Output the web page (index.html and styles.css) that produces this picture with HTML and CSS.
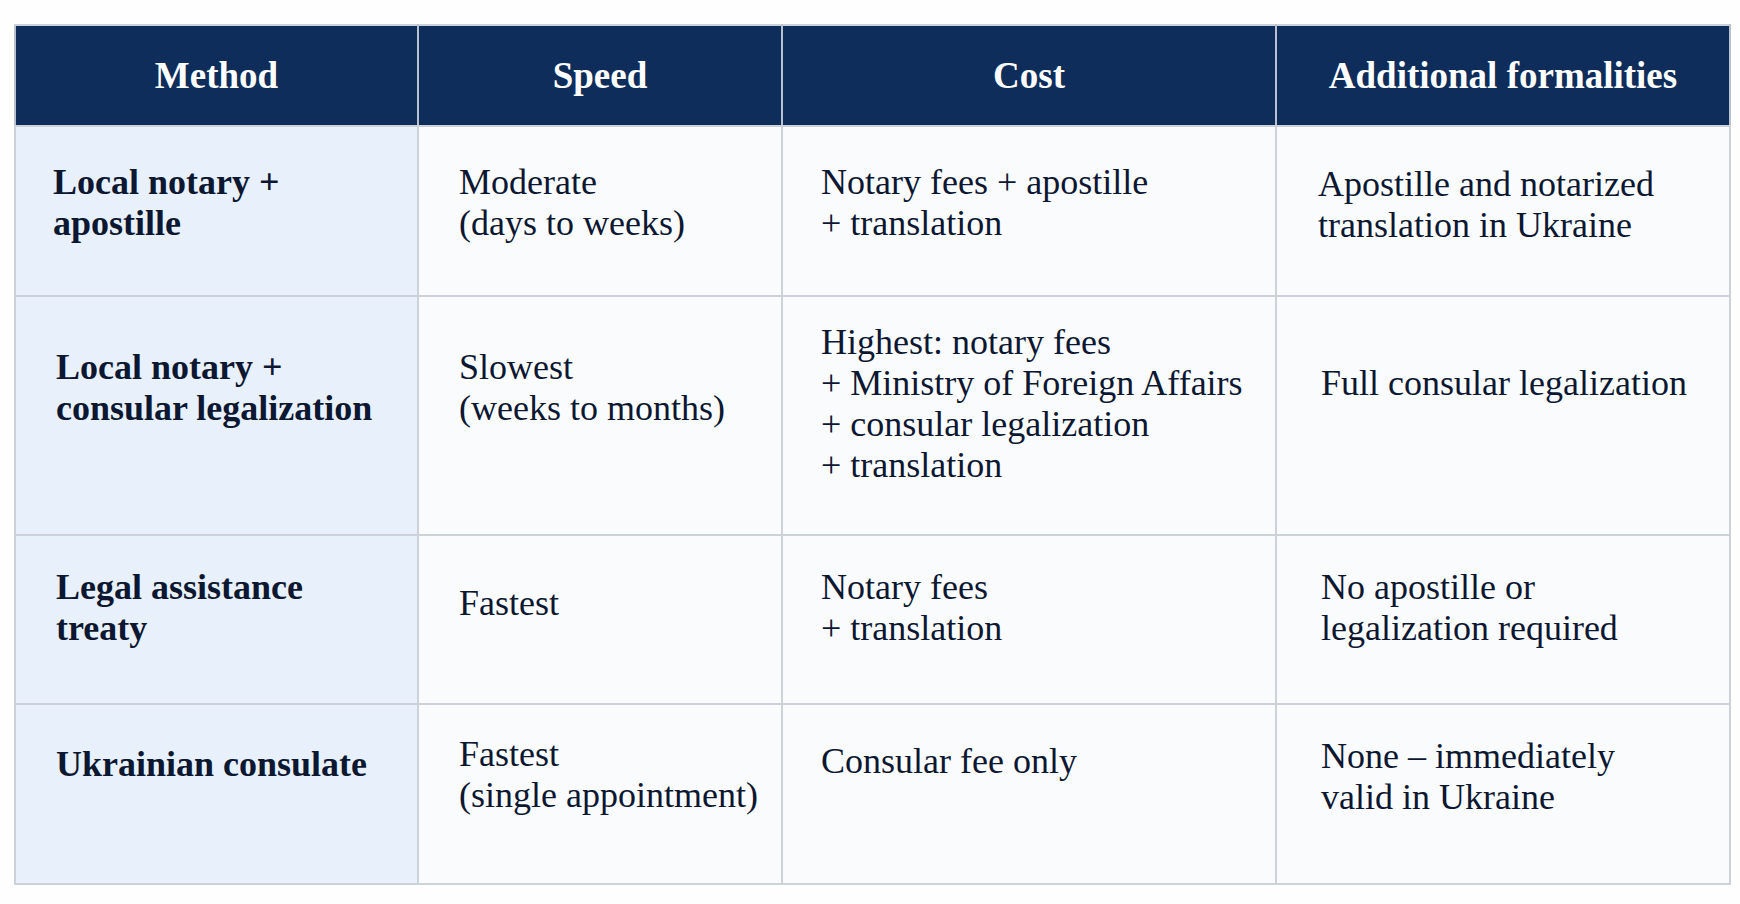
FILE: index.html
```html
<!DOCTYPE html>
<html lang="en">
<head>
<meta charset="utf-8">
<title>Methods comparison</title>
<link rel="stylesheet" href="styles.css">
</head>
<body>
<table class="compare">
  <colgroup>
    <col class="w-method">
    <col class="w-speed">
    <col class="w-cost">
    <col class="w-add">
  </colgroup>
  <thead>
    <tr class="head">
      <th>Method</th>
      <th>Speed</th>
      <th>Cost</th>
      <th>Additional formalities</th>
    </tr>
  </thead>
  <tbody>
    <tr class="r1">
      <td class="method first">Local notary +<br>apostille</td>
      <td class="speed">Moderate<br>(days to weeks)</td>
      <td class="cost">Notary fees + apostille<br>+ translation</td>
      <td class="add first pt-37">Apostille and notarized<br>translation in Ukraine</td>
    </tr>
    <tr class="r2">
      <td class="method">Local notary +<br>consular legalization</td>
      <td class="speed">Slowest<br>(weeks to months)</td>
      <td class="cost pt-25">Highest: notary fees<br>+ Ministry of Foreign Affairs<br>+ consular legalization<br>+ translation</td>
      <td class="add pt-66">Full consular legalization</td>
    </tr>
    <tr class="r3">
      <td class="method">Legal assistance<br>treaty</td>
      <td class="speed pt-47">Fastest</td>
      <td class="cost">Notary fees<br>+ translation</td>
      <td class="add">No apostille or<br>legalization required</td>
    </tr>
    <tr class="r4">
      <td class="method pt-39">Ukrainian consulate</td>
      <td class="speed pt-29">Fastest<br>(single appointment)</td>
      <td class="cost">Consular fee only</td>
      <td class="add pt-31">None – immediately<br>valid in Ukraine</td>
    </tr>
  </tbody>
</table>
</body>
</html>
```
FILE: styles.css
```css
html, body {
  margin: 0;
  padding: 0;
  background: #fefefe;
}

body {
  font-family: "Liberation Serif", "Times New Roman", serif;
  color: #0c1731;
}

.compare {
  margin: 24px 0 0 14px;
  width: 1715px;
  table-layout: fixed;
  border-collapse: collapse;
  border: 2px solid #cdd1da;
}

.w-method { width: 403px; }
.w-speed  { width: 364px; }
.w-cost   { width: 494px; }
.w-add    { width: 454px; }

.head { height: 101px; }

.head th {
  background: #0e2d5a;
  color: #ffffff;
  font-size: 37px;
  font-weight: bold;
  line-height: 41px;
  text-align: center;
  vertical-align: middle;
  padding: 0;
  border-left: 2px solid #b9c1cf;
  border-right: 2px solid #b9c1cf;
  border-top: 2px solid #cdd1da;
  border-bottom: 2px solid #cdd1da;
}

.compare td {
  font-size: 36px;
  line-height: 41px;
  vertical-align: top;
  white-space: nowrap;
  background: #fafbfd;
  border: 2px solid #cdd1da;
  padding-right: 0;
  padding-bottom: 0;
}

.compare td.method {
  background: #e8f0fb;
  font-weight: bold;
  padding-left: 40px;
}

.compare td.speed { padding-left: 40px; }
.compare td.cost  { padding-left: 38px; }
.compare td.add   { padding-left: 44px; }

.compare td.method.first { padding-left: 37px; }
.compare td.add.first { padding-left: 41px; }

.r1 { height: 170px; }
.r2 { height: 239px; }
.r3 { height: 169px; }
.r4 { height: 180px; }

.r1 td { padding-top: 35px; }
.r2 td { padding-top: 50px; }
.r3 td { padding-top: 31px; }
.r4 td { padding-top: 36px; }

.r1 td.pt-37 { padding-top: 37px; }
.r2 td.pt-25 { padding-top: 25px; }
.r2 td.pt-66 { padding-top: 66px; }
.r3 td.pt-47 { padding-top: 47px; }
.r4 td.pt-39 { padding-top: 39px; }
.r4 td.pt-29 { padding-top: 29px; }
.r4 td.pt-31 { padding-top: 31px; }
```
